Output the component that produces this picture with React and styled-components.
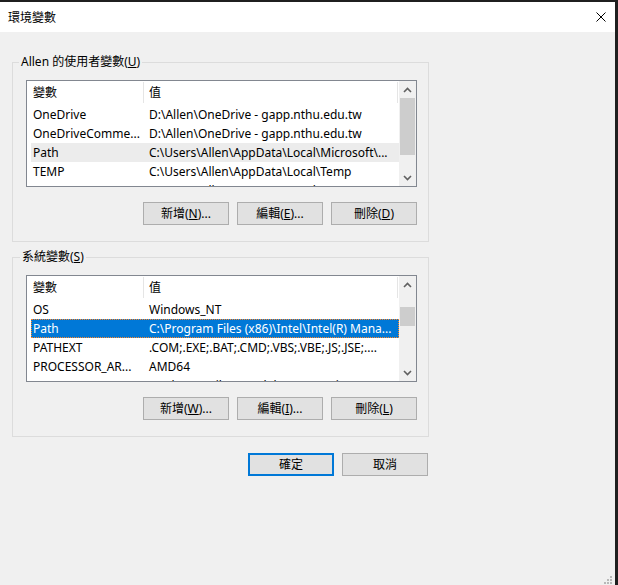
import React from "react";
import styled, { createGlobalStyle } from "styled-components";

const GlobalStyle = createGlobalStyle`
  html, body {
    margin: 0;
    padding: 0;
    background: #1f1f1f;
  }
  body {
    font-family: "Noto Sans", "Noto Sans CJK TC", sans-serif;
    font-size: 12px;
    color: #000;
  }
`;

const userVars = [
  ["OneDrive", "D:\\Allen\\OneDrive - gapp.nthu.edu.tw"],
  ["OneDriveComme...", "D:\\Allen\\OneDrive - gapp.nthu.edu.tw"],
  ["Path", "C:\\Users\\Allen\\AppData\\Local\\Microsoft\\..."],
  ["TEMP", "C:\\Users\\Allen\\AppData\\Local\\Temp"],
  ["TMP", "C:\\Users\\Allen\\AppData\\Local\\Temp"],
];

const systemVars = [
  ["OS", "Windows_NT"],
  ["Path", "C:\\Program Files (x86)\\Intel\\Intel(R) Mana..."],
  ["PATHEXT", ".COM;.EXE;.BAT;.CMD;.VBS;.VBE;.JS;.JSE;...."],
  ["PROCESSOR_AR...", "AMD64"],
  ["PROCESSOR_ID...", "Intel64 Family 6 Model 142 Stepping 10, GenuineIntel"],
];

// window frame

const Window = styled.div`
  margin-top: 2px;
  width: 615px;
  height: 583px;
  background: #f0f0f0;
  display: flex;
  flex-direction: column;
  position: relative;
  overflow: hidden;
`;

const TitleBar = styled.div`
  height: 30px;
  flex-shrink: 0;
  background: #fff;
  display: flex;
  align-items: center;
  justify-content: space-between;
  padding: 0 9px 0 8px;
  font-size: 12px;
`;

const Body = styled.div`
  padding: 30px 0 0 12px;
  display: flex;
  flex-direction: column;
  width: 417px;
`;

// group box

const Group = styled.div`
  position: relative;
  border: 1px solid #dcdcdc;
  height: 180px;
  box-sizing: border-box;
  padding: 17px 11px 0 13px;
  margin-bottom: ${(p) => p.$gap || 0}px;
`;

const Legend = styled.div`
  position: absolute;
  top: -9px;
  left: ${(p) => p.$left}px;
  padding: 0 2px;
  line-height: 16px;
  background: #f0f0f0;
  white-space: nowrap;
`;

// list view

const List = styled.div`
  width: 391px;
  height: 107px;
  box-sizing: border-box;
  border: 1px solid #828790;
  background: #fff;
  display: flex;
  overflow: hidden;
`;

const Rows = styled.div`
  width: 372px;
  padding-left: 4px;
  box-sizing: border-box;
  overflow: hidden;
`;

const Header = styled.div`
  display: grid;
  grid-template-columns: 113px 254px;
  height: 24px;
  line-height: 24px;
`;

const HeadCell = styled.div`
  padding-left: ${(p) => (p.$first ? 2 : 5)}px;
  border-right: 1px solid #e5e5e5;
  margin: 1px 0 2px;
  line-height: 21px;
`;

const Row = styled.div`
  display: grid;
  grid-template-columns: 113px 254px;
  height: 19px;
  line-height: 19px;
  box-sizing: border-box;
  background: ${(p) => (p.$selected ? "#0078d7" : p.$hot ? "#ececec" : "transparent")};
  color: ${(p) => (p.$selected ? "#fff" : "#000")};
  outline: ${(p) => (p.$selected ? "1px dotted #ff8728" : "none")};
  outline-offset: -1px;
`;

const Cell = styled.div`
  padding-left: ${(p) => (p.$first ? 2 : 5)}px;
  white-space: nowrap;
  overflow: hidden;
`;

const ScrollBar = styled.div`
  width: 17px;
  background: #f0f0f0;
  display: flex;
  flex-direction: column;
`;

const Arrow = styled.div`
  height: 17px;
  flex-shrink: 0;
  display: flex;
  align-items: center;
  justify-content: center;
`;

const Track = styled.div`
  flex: 1;
  padding: 0 1px;
`;

const Thumb = styled.div`
  background: #cdcdcd;
  margin-top: ${(p) => p.$top}px;
  height: ${(p) => p.$size}px;
`;

// buttons

const ButtonRow = styled.div`
  display: flex;
  justify-content: flex-end;
  gap: 8px;
  margin-top: ${(p) => p.$top}px;
  padding-right: ${(p) => p.$right}px;
`;

const Button = styled.button`
  width: 86px;
  height: 23px;
  box-sizing: border-box;
  padding: 0;
  background: #e1e1e1;
  border: ${(p) => (p.$default ? "2px solid #0078d7" : "1px solid #adadad")};
  font: inherit;
  color: #000;
  line-height: 19px;
`;

const Grip = styled.svg`
  position: absolute;
  right: 2px;
  bottom: 0;
`;

function Chevron({ up }) {
  return (
    <svg width="9" height="6" viewBox="0 0 9 6">
      <polyline
        points={up ? "1,5 4.5,1.5 8,5" : "1,1 4.5,4.5 8,1"}
        fill="none"
        stroke="#606060"
        strokeWidth="1.6"
      />
    </svg>
  );
}

function ListView({ rows, selected, hot, thumbTop, thumbSize }) {
  return (
    <List>
      <Rows>
        <Header>
          <HeadCell $first>變數</HeadCell>
          <HeadCell>值</HeadCell>
        </Header>
        {rows.map(([name, value], i) => (
          <Row key={i} $selected={i === selected} $hot={i === hot}>
            <Cell $first>{name}</Cell>
            <Cell>{value}</Cell>
          </Row>
        ))}
      </Rows>
      <ScrollBar>
        <Arrow>
          <Chevron up />
        </Arrow>
        <Track>
          <Thumb $top={thumbTop} $size={thumbSize} />
        </Track>
        <Arrow>
          <Chevron />
        </Arrow>
      </ScrollBar>
    </List>
  );
}

export default function App() {
  return (
    <>
      <GlobalStyle />
      <Window>
        <TitleBar>
          <span>環境變數</span>
          <svg width="10" height="10" viewBox="0 0 10 10">
            <path d="M0.5 0.5 L9.5 9.5 M9.5 0.5 L0.5 9.5" stroke="#000" strokeWidth="1" />
          </svg>
        </TitleBar>
        <Body>
          <Group $gap={15}>
            <Legend $left={6}>
              Allen 的使用者變數(<u>U</u>)
            </Legend>
            <ListView rows={userVars} hot={2} thumbTop={0} thumbSize={57} />
            <ButtonRow $top={15} $right={0}>
              <Button>
                新增(<u>N</u>)...
              </Button>
              <Button>
                編輯(<u>E</u>)...
              </Button>
              <Button>
                刪除(<u>D</u>)
              </Button>
            </ButtonRow>
          </Group>
          <Group>
            <Legend $left={7}>
              系統變數(<u>S</u>)
            </Legend>
            <ListView rows={systemVars} selected={1} thumbTop={14} thumbSize={19} />
            <ButtonRow $top={15} $right={0}>
              <Button>
                新增(<u>W</u>)...
              </Button>
              <Button>
                編輯(<u>I</u>)...
              </Button>
              <Button>
                刪除(<u>L</u>)
              </Button>
            </ButtonRow>
          </Group>
          <ButtonRow $top={16} $right={1}>
            <Button $default>確定</Button>
            <Button>取消</Button>
          </ButtonRow>
        </Body>
        <Grip width="9" height="9" viewBox="0 0 9 9">
          {[
            [6, 0],
            [3, 3],
            [6, 3],
            [0, 6],
            [3, 6],
            [6, 6],
          ].map(([x, y], i) => (
            <rect key={i} x={x} y={y} width="2" height="2" fill="#b8b8b8" />
          ))}
        </Grip>
      </Window>
    </>
  );
}
